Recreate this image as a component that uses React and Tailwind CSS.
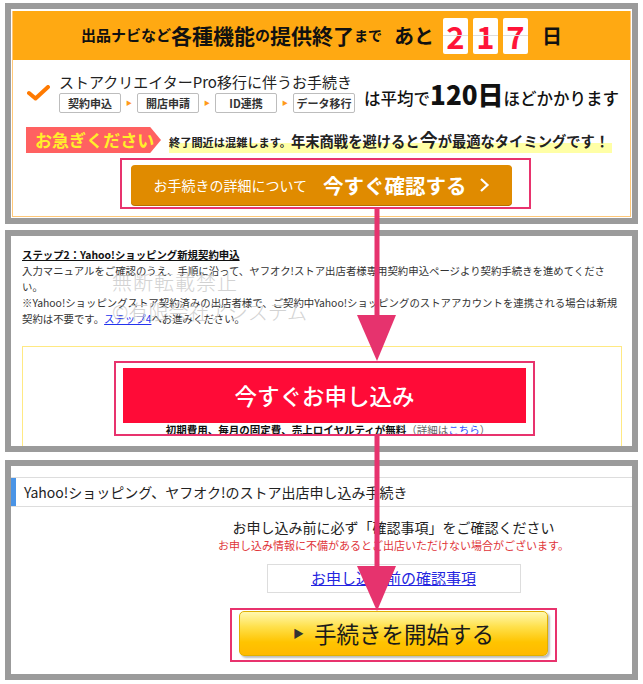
function DigitBox({ n }) {
  return (
    <span className="relative inline-flex h-[36px] w-[25px] items-center justify-center rounded-[2px] bg-white text-[31px] font-bold leading-none text-[#ff1438]">
      {n}
      <span className="absolute left-0 right-0 top-[17px] h-px bg-[#dddddd]" />
    </span>
  );
}

function Tag({ children }) {
  return (
    <span className="flex h-[20px] w-[62px] items-center justify-center rounded-[2px] border border-[#bdbdbd] bg-white text-[11px] font-bold text-[#333]">
      {children}
    </span>
  );
}

function TagArrow() {
  return <span className="mx-[5px] text-[6px] leading-none text-[#ff9a1a]">▶</span>;
}

function Panel1() {
  return (
    <div className="mx-[5px] h-[221px] border-[6px] border-[#9b9b9b] px-px pt-[2px]">
      <div className="h-[206px] border-x border-b border-[#ffc879]">
        {/* banner */}
        <div className="flex h-[49px] items-center justify-center bg-[#ffa912] font-bold text-[#111]">
          <span className="text-[15px]">出品ナビなど</span>
          <span className="text-[21px]">各種機能</span>
          <span className="text-[15px]">の</span>
          <span className="text-[21px]">提供終了</span>
          <span className="text-[14px]">まで</span>
          <span className="ml-[12px] text-[20px]">あと</span>
          <span className="ml-[9px] flex gap-[5px]">
            <DigitBox n="2" />
            <DigitBox n="1" />
            <DigitBox n="7" />
          </span>
          <span className="ml-[14px] text-[20px]">日</span>
        </div>

        {/* procedure row */}
        <div className="mt-[12px] flex items-center">
          <svg className="ml-[14px]" width="23" height="16" viewBox="0 0 23 16">
            <path d="M2 8 L8.5 13.5 L21 2" fill="none" stroke="#ff7a00" strokeWidth="4" strokeLinecap="round" strokeLinejoin="round" />
          </svg>
          <div className="ml-[9px] flex flex-col">
            <div className="text-[15px] leading-[20px] text-[#222]">ストアクリエイターPro移行に伴うお手続き</div>
            <div className="mt-px flex items-center">
              <Tag>契約申込</Tag>
              <TagArrow />
              <Tag>開店申請</Tag>
              <TagArrow />
              <Tag>ID連携</Tag>
              <TagArrow />
              <Tag>データ移行</Tag>
            </div>
          </div>
          <div className="ml-[9px] self-end whitespace-nowrap leading-[30px] text-[#111]">
            <span className="text-[16.5px] font-medium">は平均で</span>
            <span className="text-[26px] font-black">120日</span>
            <span className="text-[16.5px] font-medium">ほどかかります</span>
          </div>
        </div>

        {/* hurry row */}
        <div className="mt-[14px] flex items-center">
          <div className="ml-[13px] flex h-[26px] w-[135px] items-center bg-[#ff6161] pl-[9px] text-[17px] font-bold text-[#fff02a] [clip-path:polygon(0_0,92%_0,100%_50%,92%_100%,0_100%)]">
            お急ぎください
          </div>
          <div className="ml-[8px] whitespace-nowrap bg-[linear-gradient(transparent_62%,#ffffa6_62%)] pr-[3px] font-bold leading-[22px] text-[#222]">
            <span className="text-[11.2px]">終了間近は混雑します。</span>
            <span className="text-[14.3px]">年末商戦を避けると</span>
            <span className="text-[18px]">今</span>
            <span className="text-[14.3px]">が最適なタイミングです！</span>
          </div>
        </div>

        {/* button */}
        <div className="ml-[107px] mt-[5px] h-[51px] w-[411px] border-2 border-[#e8336d] pl-[9px] pt-[5px]">
          <div className="flex h-[40px] w-[381px] items-center justify-center rounded-[4px] bg-[#e08b00] text-white shadow-[0_1px_0_#b86f00]">
            <span className="text-[14px]">お手続きの詳細について</span>
            <span className="ml-[16px] text-[20.5px] font-bold">今すぐ確認する</span>
            <svg className="ml-[12px]" width="11" height="16" viewBox="0 0 11 16">
              <path d="M2 2 L8.5 8 L2 14" fill="none" stroke="#fff" strokeWidth="2.2" />
            </svg>
          </div>
        </div>
      </div>
    </div>
  );
}

function Panel2() {
  return (
    <div className="relative mx-[5px] mt-[6px] h-[222px] overflow-hidden border-[6px] border-[#9b9b9b] bg-white">
      <div className="pl-[11px] pt-[11px] text-[10.4px] leading-[16px] text-[#333]">
        <div className="whitespace-nowrap font-bold text-[#111] underline">ステップ2：Yahoo!ショッピング新規契約申込</div>
        <div className="whitespace-nowrap">入力マニュアルをご確認のうえ、手順に沿って、ヤフオク!ストア出店者様専用契約申込ページより契約手続きを進めてくださ</div>
        <div className="whitespace-nowrap">い。</div>
        <div className="whitespace-nowrap">※Yahoo!ショッピングストア契約済みの出店者様で、ご契約中Yahoo!ショッピングのストアアカウントを連携される場合は新規</div>
        <div className="whitespace-nowrap">
          契約は不要です。<span className="text-[#2233ee] underline">ステップ4</span>へお進みください。
        </div>
      </div>

      <div className="pointer-events-none absolute left-[101px] top-[33px] whitespace-nowrap text-[20px] font-light leading-[26px] text-[#c8c8c8] opacity-80">
        <div className="tracking-[1px]">無断転載禁止</div>
        <div className="mt-[4px]">©有限会社アシステム</div>
      </div>

      <div className="ml-[11px] mt-[19px] h-[120px] w-[600px] border border-[#ffe983] pt-[14px]">
        <div className="ml-[91px] h-[75px] w-[421px] border-2 border-[#e8336d] pl-[7px] pt-[5px]">
          <div className="flex h-[55px] w-[403px] items-center justify-center bg-[#ff0b37] text-[22.5px] font-medium text-white">
            今すぐお申し込み
          </div>
          <div className="h-[11px] overflow-hidden text-center text-[10.5px] leading-[13px]">
            <span className="font-bold text-[#111]">初期費用、毎月の固定費、売上ロイヤルティが無料</span>
            <span className="text-[#666]">（詳細は</span>
            <span className="text-[#3350ff]">こちら</span>
            <span className="text-[#666]">）</span>
          </div>
        </div>
      </div>
    </div>
  );
}

function Panel3() {
  return (
    <div className="mx-[5px] mt-[8px] h-[220px] border-[6px] border-[#9b9b9b] bg-white">
      <div className="mt-[11px] flex h-[30px] items-stretch border-y border-[#dddddd]">
        <div className="w-[5px] bg-[#4a94e6]" />
        <div className="ml-[8px] flex items-center text-[14px] text-[#222]">Yahoo!ショッピング、ヤフオク!のストア出店申し込み手続き</div>
      </div>

      <div className="ml-[144px] flex flex-col items-center">
        <div className="mt-[10px] text-[14px] leading-[20px] text-[#222]">お申し込み前に必ず「確認事項」をご確認ください</div>
        <div className="text-[11px] leading-[16px] text-[#e0353a]">お申し込み情報に不備があるとご出店いただけない場合がございます。</div>
        <div className="mt-[11px] flex h-[29px] w-[254px] items-center justify-center border border-[#dddddd]">
          <span className="text-[15px] text-[#2424e0] underline">お申し込み前の確認事項</span>
        </div>
        <div className="mt-[15px] h-[54px] w-[327px] border-2 border-[#e8336d] pl-[7px] pt-px">
          <div className="flex h-[45px] w-[309px] items-center justify-center rounded-[5px] border border-[#e0b000] bg-[linear-gradient(#fff8b0_0%,#ffe04a_35%,#ffc400_70%,#ffb900_100%)] shadow-[2px_2px_2px_#bdbdbd]">
            <span className="text-[11px] text-[#333]">▶</span>
            <span className="ml-[10px] text-[22.5px] text-[#1a1a1a]">手続きを開始する</span>
          </div>
        </div>
      </div>
    </div>
  );
}

function Arrows() {
  return (
    <svg className="pointer-events-none absolute left-0 top-0" width="643" height="684" viewBox="0 0 643 684">
      <g fill="#e6336e">
        <rect x="374.5" y="209" width="5" height="110" />
        <polygon points="357,315 396,315 377,361" />
        <rect x="374.5" y="436" width="5" height="134" />
        <polygon points="357,566 396,566 377,611" />
      </g>
    </svg>
  );
}

export default function App() {
  return (
    <div className="relative h-[684px] w-[643px] bg-white pt-[3px] font-['Noto_Sans_CJK_JP','Noto_Sans',sans-serif]">
      <Panel1 />
      <Panel2 />
      <Panel3 />
      <Arrows />
    </div>
  );
}
